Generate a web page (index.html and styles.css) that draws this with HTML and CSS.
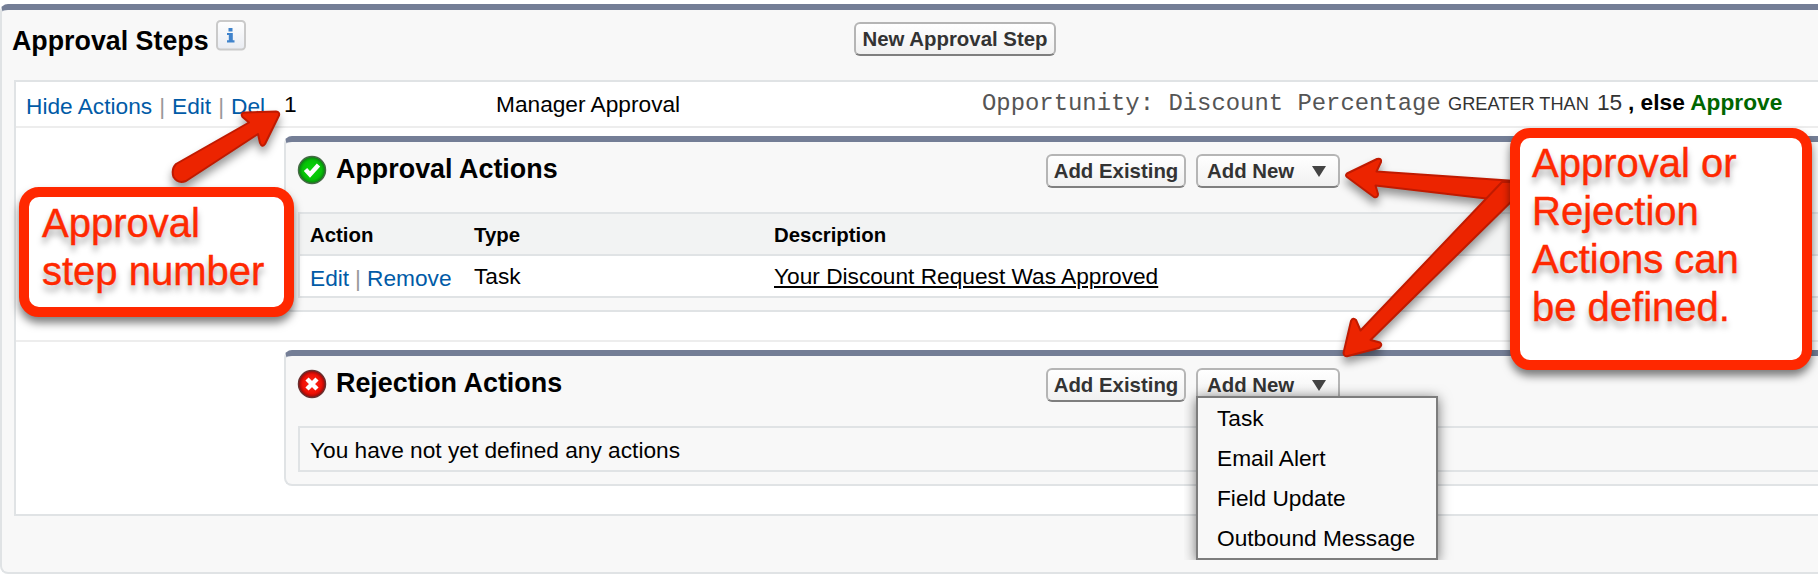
FILE: index.html
```html
<!DOCTYPE html>
<html lang="en">
<head>
<meta charset="utf-8">
<title>Approval Steps</title>
<link rel="stylesheet" href="styles.css">
</head>
<body>
<section class="panel panel-main">
  <header class="main-head">
    <h2 class="title">Approval Steps</h2>
    <svg class="info" width="30" height="31" viewBox="0 0 30 31">
      <defs><linearGradient id="ig" x1="0" y1="0" x2="0" y2="1"><stop offset="0" stop-color="#fff"/><stop offset="1" stop-color="#e9ecf2"/></linearGradient></defs>
      <rect x="1" y="1" width="28" height="28.500" rx="3.500" fill="url(#ig)" stroke="#cacaca" stroke-width="2"/>
      <rect x="12.500" y="8" width="4" height="3.500" fill="#3f83cc"/>
      <path d="M11 13H16.800V20.200H18.500V22.500H11V20.200H12.800V15H11Z" fill="#3f83cc"/>
    </svg>
    <button class="btn btn-step">New Approval Step</button>
  </header>
  <div class="steps">
    <div class="step-row">
      <div class="links step-links"><a>Hide Actions</a><i>|</i><a>Edit</a><i>|</i><a>Del</a></div>
      <div class="step-num">1</div>
      <div class="step-name">Manager Approval</div>
      <div class="criteria"><span class="field">Opportunity: Discount Percentage</span><span class="oper">GREATER THAN</span><span class="value">15</span><b>, else <span class="approve">Approve</span></b></div>
    </div>
    <div class="action-row action-row-first">
      <section class="panel panel-sub panel-approve">
        <header class="sub-head">
          <svg class="status" width="30" height="30" viewBox="0 0 30 30">
            <defs><radialGradient id="gg"><stop offset="0" stop-color="#0bd80b"/><stop offset=".7" stop-color="#06c206"/><stop offset="1" stop-color="#0b7a12"/></radialGradient></defs>
            <circle cx="15" cy="15" r="13.500" fill="url(#gg)" stroke="#456b45" stroke-width="1.500"/>
            <path d="M8.500 14.500L13 19.500L21.500 10" fill="none" stroke="#fff" stroke-width="4.500"/>
          </svg>
          <h3 class="title">Approval Actions</h3>
          <button class="btn btn-existing">Add Existing</button>
          <button class="btn btn-new">Add New<span class="caret"></span></button>
        </header>
        <div class="list">
          <div class="list-row list-head"><span>Action</span><span>Type</span><span>Description</span></div>
          <div class="list-row list-item"><div class="links"><a>Edit</a><i>|</i><a>Remove</a></div><span>Task</span><u>Your Discount Request Was Approved</u></div>
        </div>
      </section>
    </div>
    <div class="action-row">
      <section class="panel panel-sub panel-reject">
        <header class="sub-head">
          <svg class="status" width="30" height="30" viewBox="0 0 30 30">
            <defs><radialGradient id="rg"><stop offset="0" stop-color="#ff2a1a"/><stop offset=".7" stop-color="#f01005"/><stop offset="1" stop-color="#8d0a0a"/></radialGradient></defs>
            <circle cx="15" cy="15" r="13.500" fill="url(#rg)" stroke="#6b3030" stroke-width="1.500"/>
            <path d="M10 10L20 20M20 10L10 20" fill="none" stroke="#fff" stroke-width="4.500"/>
          </svg>
          <h3 class="title">Rejection Actions</h3>
          <button class="btn btn-existing">Add Existing</button>
          <div class="menu-anchor">
            <button class="btn btn-new">Add New<span class="caret"></span></button>
            <div class="menu-clip"><ul class="menu"><li>Task</li><li>Email Alert</li><li>Field Update</li><li>Outbound Message</li></ul></div>
          </div>
        </header>
        <div class="list list-empty">You have not yet defined any actions</div>
      </section>
    </div>
  </div>
</section>

<svg class="arrows" width="1818" height="582" viewBox="0 0 1818 582">
  <g fill="#ec2400" stroke="#c01a00" stroke-width="2" stroke-linejoin="round">
    <path d="M176 164L249 122.500L242.500 117Q240 113 245 112.500L276 111.500Q280 112 279 115.500L265 144Q262 148 260 143L258 134L186 181Q178 184 173.500 177Q171 169 176 164Z"/>
    <path d="M1347 173.500L1377 159Q1382 158 1381 162L1376.500 171.500L1516 181V202L1375.500 185.500L1378 194Q1378 198 1374 197L1347 177Q1345 175 1347 173.500Z"/>
    <path d="M1502 182L1360.500 330.500L1356 320Q1353 317 1351 321L1343.500 353Q1344 357 1348 356L1379 348Q1383 345 1380 342.500L1370.500 340L1522 191V182Z"/>
  </g>
</svg>
<div class="callout callout-number">Approval<br>step number</div>
<div class="callout callout-actions">Approval or<br>Rejection<br>Actions can<br>be defined.</div>
</body>
</html>
```
FILE: styles.css
```css
* { box-sizing: border-box; }
body {
  margin: 0;
  width: 1818px;
  height: 582px;
  overflow: hidden;
  position: relative;
  padding-top: 4px;
  background: #fff;
  color: #000;
  font: 22.7px/26px "Liberation Sans", Arial, sans-serif;
}
.panel {
  background: #f8f8f8;
  border: 2px solid #e0e3e5;
  border-right: 0;
  border-top: 6px solid #747e96;
  border-radius: 8px 0 0 8px;
}
.panel-main { height: 570px; margin-left: 0; }
.main-head { display: flex; align-items: flex-start; height: 70px; padding-left: 10px; }
.title { margin: 0; font-size: 26.9px; line-height: 32px; font-weight: bold; white-space: nowrap; }
.main-head .title { width: 204px; padding-top: 15px; font-size: 26.8px; }
.info { margin-top: 10px; }
.btn {
  height: 34px;
  padding: 0;
  border: 2px solid #b5b5b5;
  border-bottom-color: #7f7f7f;
  border-radius: 6px;
  background: linear-gradient(#fff, #f1f1f1);
  color: #333;
  font: bold 20.4px/26px "Liberation Sans", Arial, sans-serif;
  white-space: nowrap;
}
.btn-step { width: 202px; margin: 12px 0 0 608px; }
.steps { height: 436px; margin-left: 12px; background: #fff; border: 2px solid #e0e3e5; border-right: 0; }
.step-row { display: flex; height: 46px; border-bottom: 2px solid #ededed; padding-left: 10px; }
.links { display: flex; gap: 7px; color: #015ba7; }
.links i { color: #999; font-style: normal; }
.step-links { width: 258px; padding-top: 11px; }
.step-num { width: 212px; padding-top: 9px; }
.step-name { width: 486px; padding-top: 9px; }
.criteria { display: flex; align-items: baseline; color: #333; white-space: nowrap; padding-top: 7px; }
.field { width: 466px; font: 23.9px/26px "Liberation Mono", monospace; color: #555; }
.oper { width: 149px; font-size: 18.2px; }
.value { width: 31px; }
.criteria b { color: #000; }
.criteria .approve { color: #060; }
.action-row { padding: 8px 0 0 268px; }
.action-row-first { height: 214px; border-bottom: 2px solid #ededed; }
.panel-approve { height: 176px; }
.panel-reject { height: 136px; }
.sub-head { display: flex; height: 70px; padding-left: 11px; }
.status { margin-top: 13px; flex: none; }
.sub-head .title { width: 719px; padding: 11px 0 0 9px; }
.sub-head .btn { margin-top: 12px; }
.sub-head .btn-existing { width: 140px; margin-right: 10px; }
.sub-head .btn-new { width: 144px; display: flex; align-items: center; padding-left: 9px; }
.caret { margin-left: 18px; border: 7px solid transparent; border-top: 11px solid #444; border-bottom: 0; }
.list { margin-left: 12px; border: 2px solid #e0e3e5; border-right: 0; }
.list-row { display: grid; grid-template-columns: 164px 300px 1fr; padding-left: 10px; height: 44px; }
.list-head { background: #f2f3f3; border-bottom: 2px solid #e0e3e5; font-size: 20.4px; font-weight: bold; line-height: 42px; }
.list-item { background: #fff; height: 40px; line-height: 39px; }
.panel-approve .list { height: 86px; }
.panel-approve .list-head { height: 42px; }
.list-item .links { gap: 6px; line-height: 44px; }
.list-item { line-height: 41px; }
u { text-decoration-thickness: 2px; text-underline-offset: 2px; }
.list-empty { height: 46px; padding-left: 10px; line-height: 44px; }
.menu-anchor { position: relative; }
.menu-clip { position: absolute; left: -12px; top: 28px; width: 270px; height: 176px; padding: 12px; overflow: hidden; }
.menu {
  margin: 0;
  width: 242px;
  height: 164px;
  padding: 0 0 0 19px;
  border: 2px solid #7d7d7d;
  background: #f8f8f8;
  box-shadow: 0 2px 12px rgba(0, 0, 0, .55);
  list-style: none;
  line-height: 40px;
}
.arrows { position: absolute; left: 0; top: 0; filter: drop-shadow(0 6px 4px rgba(0, 0, 0, .4)); }
.callout {
  position: absolute;
  border: 10px solid #ff2800;
  border-radius: 20px;
  background: #fff;
  color: #ff2800;
  font-size: 40px;
  line-height: 48px;
  white-space: nowrap;
  -webkit-text-stroke: .4px #ff2800;
  text-shadow: 0 6px 6px rgba(0, 0, 0, .35);
  box-shadow: 0 6px 9px rgba(0, 0, 0, .5);
}
.callout-number { left: 19px; top: 187px; width: 275px; height: 130px; padding: 2px 0 0 13px; }
.callout-actions { left: 1510px; top: 128px; width: 302px; height: 242px; padding: 1px 0 0 12px; }
```
